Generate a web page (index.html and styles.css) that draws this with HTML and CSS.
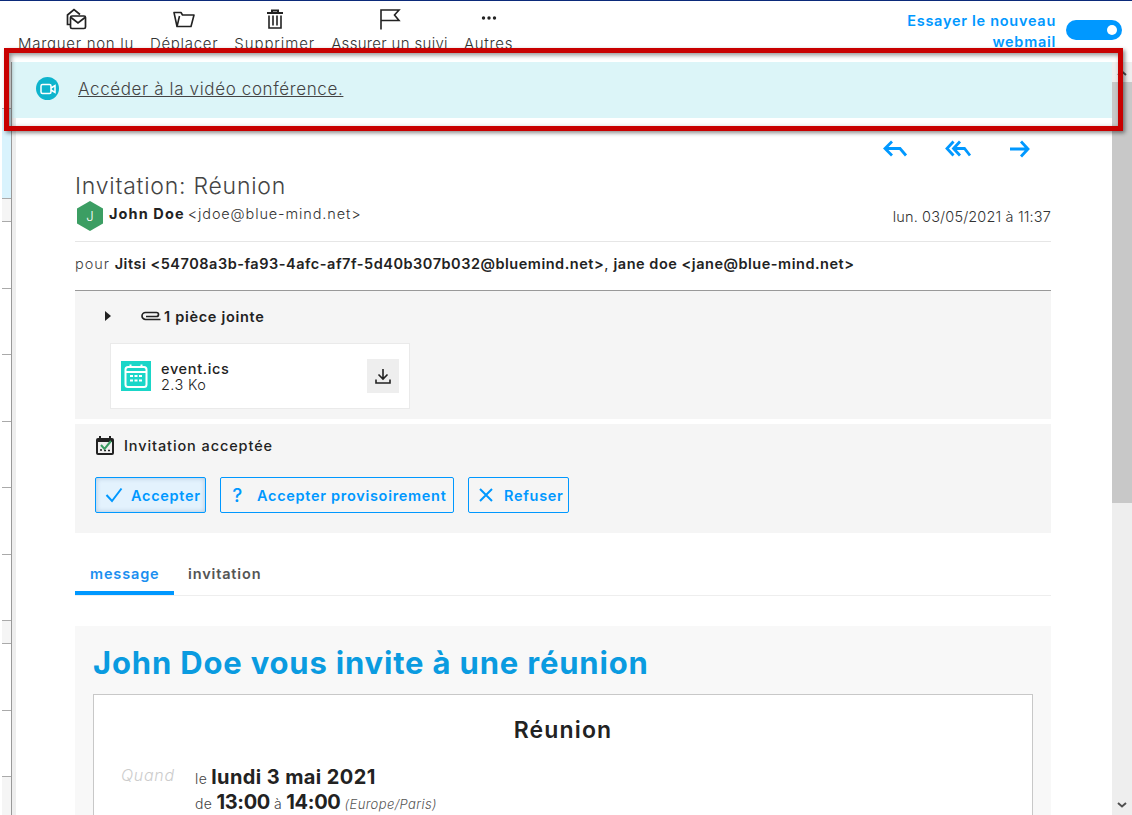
FILE: index.html
```html
<!DOCTYPE html>
<html lang="fr">
<head>
<meta charset="utf-8">
<title>Invitation: Réunion</title>
<link rel="stylesheet" href="styles.css">
</head>
<body>
<div class="app">
  <header class="toolbar">
    <nav class="actions">
      <div class="action"><svg viewBox="0 0 22 22" width="22" height="22"><path d="M2.500 13V7L9 1.500 15 6.500" fill="none" stroke="#222" stroke-width="1.700"/><path d="M2.500 13v3.500H5" fill="none" stroke="#222" stroke-width="1.700"/><rect x="5.500" y="8" width="15" height="12.500" rx="1.500" fill="#fff" stroke="#222" stroke-width="1.700"/><path d="M6 9.500l7 5.500 7-5.500" fill="none" stroke="#222" stroke-width="1.700"/></svg><span>Marquer non lu</span></div>
      <div class="action"><svg viewBox="0 0 24 20" width="24" height="20"><path d="M5 17.500L2 3.500h7l1.500 2.500H22l-3 11.500z" fill="none" stroke="#222" stroke-width="1.600" stroke-linejoin="round"/><path d="M5 17.500L7.500 7" fill="none" stroke="#222" stroke-width="1.600"/></svg><span>Déplacer</span></div>
      <div class="action action-del"><svg viewBox="0 0 20 21" width="20" height="21"><path d="M2 4.500h16M7 4.500V2h6v2.500" fill="none" stroke="#222" stroke-width="2"/><path d="M4 7v12.500h12V7M8 7v10M12 7v10" fill="none" stroke="#222" stroke-width="1.600"/></svg><span>Supprimer</span></div>
      <div class="action action-follow"><svg viewBox="0 0 22 22" width="22" height="22"><path d="M2 21.500V2h18l-4.500 5 4.500 5.500H2" fill="none" stroke="#222" stroke-width="1.600"/></svg><span>Assurer un suivi</span></div>
      <div class="action"><svg viewBox="0 0 22 22" width="22" height="22"><circle cx="5.500" cy="10" r="1.700" fill="#222"/><circle cx="11" cy="10" r="1.700" fill="#222"/><circle cx="16.500" cy="10" r="1.700" fill="#222"/></svg><span>Autres</span></div>
    </nav>
    <div class="try">
      <span class="try-label">Essayer le nouveau webmail</span>
      <span class="toggle"><i class="knob"></i></span>
    </div>
  </header>

  <div class="workspace">
    <aside class="list">
      <div class="row row-top"></div>
      <div class="row row-sel"></div>
      <div class="row row-gray row-s"></div>
      <div class="row"></div>
      <div class="row"></div>
      <div class="row"></div>
      <div class="row"></div>
      <div class="row"></div>
      <div class="row"></div>
      <div class="row row-gray row-s"></div>
      <div class="row"></div>
      <div class="row"></div>
      <div class="row row-gray"></div>
    </aside>

    <main class="reader">
      <div class="notice">
        <span class="notice-ic"><svg viewBox="0 0 16 12" width="16" height="12"><rect x="1" y="1.500" width="10" height="9" rx="1.500" fill="none" stroke="#fff" stroke-width="1.500"/><path d="M11 5l4-2.500v7L11 7" fill="none" stroke="#fff" stroke-width="1.500"/></svg></span>
        <a class="notice-link" href="#">Accéder à la vidéo conférence.</a>
      </div>

      <div class="mail-scroll">
        <div class="mail">
          <div class="reply-bar">
            <svg viewBox="0 0 26 18" width="26" height="18"><path d="M10 1.500L3 8.500l7 7M3 8.500h15l6 7" fill="none" stroke="#0098ff" stroke-width="2.800"/></svg>
            <svg viewBox="0 0 27 18" width="27" height="18"><path d="M8.500 1.500L2 8.500l6.500 7M15 1.500L8.500 8.500l6.500 7M8.500 8.500h11l5.500 7" fill="none" stroke="#0098ff" stroke-width="2.800"/></svg>
            <svg viewBox="0 0 22 18" width="22" height="18"><path d="M12 1.500l7 7.500-7 7.500M19.500 9H1" fill="none" stroke="#0098ff" stroke-width="2.800"/></svg>
          </div>

          <h1 class="subject">Invitation: Réunion</h1>
          <div class="sender">
            <div class="who">
              <span class="avatar"><svg viewBox="0 0 26 30" width="26" height="30"><path d="M13 0l13 7.500v15L13 30 0 22.500v-15z" fill="#3c9e63"/></svg><b class="avatar-letter">J</b></span>
              <span class="sender-name">John Doe</span>
              <span class="sender-mail">&lt;jdoe@blue-mind.net&gt;</span>
            </div>
            <span class="date">lun. 03/05/2021 à 11:37</span>
          </div>
          <div class="recipients">
            <span class="light">pour</span> <b>Jitsi &lt;54708a3b-fa93-4afc-af7f-5d40b307b032@bluemind.net&gt;</b>, <b>jane doe &lt;jane@blue-mind.net&gt;</b>
          </div>

          <section class="attachments">
            <div class="att-head">
              <i class="caret"></i>
              <svg class="clip" viewBox="0 0 20 10" width="20" height="10"><path d="M19.500 8.500H4.500A3.500 3.500 0 0 1 4.500 1.500h11a2 2 0 0 1 0 4H5" fill="none" stroke="#222" stroke-width="1.700"/></svg>
              <span class="att-title">1 pièce jointe</span>
            </div>
            <div class="att-card">
              <span class="att-ic"><svg viewBox="0 0 30 30" width="30" height="30"><rect width="30" height="30" fill="#1ad6c8"/><rect x="4.500" y="6" width="21" height="20" rx="2.500" fill="none" stroke="#fff" stroke-width="2"/><path d="M5 11h20M9.500 3.500V7M20.500 3.500V7" stroke="#fff" stroke-width="2"/><path d="M9 15h3M13.500 15h3M18 15h3M9 19.500h3M13.500 19.500h3M18 19.500h3" stroke="#fff" stroke-width="2.200"/></svg></span>
              <div class="att-info"><span class="att-name">event.ics</span><span class="att-size">2.3 Ko</span></div>
              <span class="att-dl"><svg viewBox="0 0 16 16" width="16" height="16"><path d="M8 1v10M3.500 6.500L8 11l4.500-4.500M1 11.500V15h14v-3.500" fill="none" stroke="#222" stroke-width="1.600"/></svg></span>
            </div>
          </section>

          <section class="invite">
            <div class="inv-head">
              <svg viewBox="0 0 20 20" width="20" height="20"><path d="M1 5a2 2 0 0 1 2-2h14a2 2 0 0 1 2 2v13a2 2 0 0 1-2 2H3a2 2 0 0 1-2-2z" fill="#222"/><path d="M5 1v3M15 1v3" stroke="#222" stroke-width="2"/><rect x="3" y="7" width="14" height="11" fill="#f0f0f0"/><path d="M5 15h2M9 15.500h2M13 15.500h2" stroke="#222" stroke-width="1.500"/><path d="M6 10l3.500 4L16 6" fill="none" stroke="#3c9e63" stroke-width="2"/></svg>
              <span class="inv-title">Invitation acceptée</span>
            </div>
            <div class="inv-actions">
              <button class="btn btn-on"><svg viewBox="0 0 18 16" width="18" height="16"><path d="M1.500 8l5.500 6L16.500 1.500" fill="none" stroke="#0098ff" stroke-width="2"/></svg><span>Accepter</span></button>
              <button class="btn btn-wide"><span class="q">?</span><span>Accepter provisoirement</span></button>
              <button class="btn btn-no"><svg viewBox="0 0 16 16" width="16" height="16"><path d="M2 2l12 12M14 2L2 14" fill="none" stroke="#0098ff" stroke-width="2"/></svg><span>Refuser</span></button>
            </div>
          </section>

          <div class="tabs">
            <span class="tab tab-on">message</span>
            <span class="tab">invitation</span>
          </div>

          <article class="event">
            <h2 class="event-head">John Doe vous invite à une réunion</h2>
            <div class="event-box">
              <h3 class="event-title">Réunion</h3>
              <div class="when">
                <span class="when-label">Quand</span>
                <div class="when-text">
                  <div class="when-day"><span class="small small-le">le</span> <b>lundi 3 mai 2021</b></div>
                  <div class="when-hour"><span class="small">de</span> <b>13:00</b> <span class="small">à</span> <b>14:00</b> <em>(Europe/Paris)</em></div>
                </div>
              </div>
            </div>
          </article>
        </div>
      </div>
    </main>

    <div class="scrollbar">
      <svg class="sb-up" viewBox="0 0 10 6" width="10" height="6"><path d="M1 5l4-3.500L9 5" fill="none" stroke="#505050" stroke-width="2"/></svg>
      <div class="sb-thumb"></div>
      <svg class="sb-down" viewBox="0 0 10 6" width="10" height="6"><path d="M1 1l4 3.500L9 1" fill="none" stroke="#505050" stroke-width="2"/></svg>
    </div>
  </div>

  <div class="annotation"></div>
</div>
</body>
</html>
```

FILE: styles.css
```css
* { box-sizing: border-box; }
html, body { margin: 0; height: 100%; overflow: hidden; background: #fff; }
body { font-family: "Inter", "Noto Sans", sans-serif; color: #222; }
svg { display: block; flex: none; }
h1, h2, h3 { margin: 0; }

.app { position: relative; height: 815px; display: flex; flex-direction: column; border-top: 1px solid #0b2a7a; overflow: hidden; }

/* toolbar */
.toolbar { height: 61px; flex: none; display: flex; justify-content: space-between; padding: 7px 10px 0 18px; }
.actions { display: flex; gap: 16px; }
.action { display: flex; flex-direction: column; align-items: center; font-size: 15px; font-weight: 300; color: #333; line-height: 17px; letter-spacing: .7px; white-space: nowrap; }
.action-del { letter-spacing: .92px; }
.action-follow { letter-spacing: .32px; }
.action svg { height: 22px; margin-bottom: 5px; }
.try { display: flex; gap: 10px; align-items: flex-start; padding-top: 2px; }
.try-label { width: 160px; text-align: right; font-size: 14.500px; font-weight: 600; line-height: 21px; color: #0098ff; letter-spacing: .72px; }
.toggle { width: 56px; height: 20px; margin-top: 10px; border-radius: 10px; background: #0098ff; display: flex; justify-content: flex-end; align-items: center; padding-right: 5px; }
.knob { width: 10px; height: 10px; border-radius: 50%; background: #fff; }

.workspace { flex: 1; min-height: 0; display: flex; }

/* message list stub */
.list { width: 12px; flex: none; padding-left: 2px; border-right: 1px solid #999; display: flex; flex-direction: column; }
.row { height: 66.500px; border-bottom: 1px solid #aaa; flex: none; }
.row-top { height: 47px; }
.row-sel { height: 90px; background: #d9f3fd; }
.row-gray { background: #f5f5f5; }
.row-s { height: 23px; }
.row:last-child { border-bottom: 0; height: 40px; }

/* reader */
.reader { flex: 1; min-width: 0; display: flex; flex-direction: column; }
.notice { height: 56px; flex: none; background: #dcf5f8; display: flex; align-items: center; gap: 19px; padding: 0 0 3px 24px; }
.notice-ic { width: 23px; height: 23px; border-radius: 50%; background: #0eb4cd; display: flex; align-items: center; justify-content: center; }
.notice-link { font-size: 17px; font-weight: 300; color: #444; letter-spacing: .63px; }

.mail-scroll { flex: 1; min-height: 0; border-left: 4px solid #eee; overflow: hidden; padding-left: 59px; }
.mail { width: 976px; }

.reply-bar { height: 54px; display: flex; justify-content: flex-end; align-items: flex-start; gap: 37px; padding: 22px 20px 0 0; }
.subject { font-size: 23px; font-weight: 300; line-height: 28px; color: #444; letter-spacing: .76px; }
.sender { height: 42px; display: flex; justify-content: space-between; border-bottom: 1px solid #e6e6e6; font-size: 14.500px; padding-top: 1px; }
.who { display: flex; align-items: flex-start; margin-left: 2px; line-height: 26px; }
.avatar { position: relative; display: block; width: 26px; height: 30px; margin-right: 6px; }
.avatar-letter { position: absolute; inset: 0; text-align: center; line-height: 30px; color: #fff; font-weight: 300; font-size: 13px; }
.sender-name { font-weight: 700; letter-spacing: 1.100px; margin-right: 3px; }
.sender-mail { font-weight: 300; letter-spacing: .87px; color: #333; }
.date { line-height: 32px; font-weight: 300; letter-spacing: .14px; color: #333; }
.recipients { height: 49px; border-bottom: 1px solid #999; padding-top: 12px; font-size: 14.500px; line-height: 20px; letter-spacing: .52px; }
.recipients b { font-weight: 600; }
.light { font-weight: 300; color: #444; letter-spacing: 1px; }

.attachments { height: 128px; background: #f5f5f5; padding: 15px 0 0 30px; }
.att-head { display: flex; align-items: center; height: 20px; }
.caret { width: 0; height: 0; border-left: 6px solid #222; border-top: 5px solid transparent; border-bottom: 5px solid transparent; }
.clip { margin-left: 30px; margin-right: 3px; }
.att-title { font-size: 14.500px; font-weight: 600; letter-spacing: .7px; }
.att-card { margin: 17px 0 0 5px; width: 300px; height: 66px; background: #fff; border: 1px solid #eaeaea; display: flex; align-items: center; padding: 0 10px; }
.att-ic { margin-right: 10px; }
.att-info { flex: 1; display: flex; flex-direction: column; padding-top: 1px; font-size: 14.500px; line-height: 16px; letter-spacing: .4px; }
.att-name { font-weight: 500; letter-spacing: .65px; }
.att-size { font-weight: 300; }
.att-dl { width: 32px; height: 34px; background: #eee; display: flex; align-items: center; justify-content: center; }

.invite { height: 109px; margin-top: 5px; background: #f5f5f5; padding: 11px 0 0 20px; }
.inv-head { display: flex; align-items: center; gap: 9px; height: 20px; }
.inv-title { font-size: 14.500px; font-weight: 500; letter-spacing: .9px; }
.inv-actions { display: flex; gap: 14px; margin-top: 22px; }
.btn { height: 36px; background: transparent; border: 1px solid #0098ff; border-radius: 2px; color: #0098ff; font: 600 14.500px "Inter", "Noto Sans", sans-serif; letter-spacing: .7px; display: flex; align-items: center; padding: 0 4px 0 9px; gap: 8px; width: 111px; white-space: nowrap; }
.btn-on { background: #e3f2fd; box-shadow: inset 0 0 5px rgba(0, 60, 120, .25); }
.btn-wide { width: 234px; padding-left: 10px; gap: 13px; }
.btn-no { width: 101px; gap: 10px; }
.q { font-size: 19px; font-weight: 500; width: 13px; text-align: center; }

.tabs { display: flex; margin-top: 22px; height: 41px; border-bottom: 1px solid #eee; font-size: 14.500px; font-weight: 600; letter-spacing: .85px; }
.tab { height: 40px; padding: 9px 13px 0 14px; line-height: 20px; color: #555; }
.tab-on { width: 99px; padding-left: 15px; color: #1b8ff0; border-bottom: 4px solid #0098ff; }

.event { margin-top: 30px; background: #f8f8f8; padding: 18px 18px 0; height: 300px; }
.event-head { font-size: 31px; line-height: 38px; margin-bottom: 12px; font-weight: 700; color: #0a9be0; letter-spacing: .82px; white-space: nowrap; }
.event-box { background: #fff; border: 1px solid #c8c8c8; height: 200px; padding: 21px 27px 0; }
.event-title { font-size: 23px; line-height: 28px; font-weight: 600; text-align: center; letter-spacing: 1.150px; }
.when { display: flex; margin-top: 19px; gap: 25px; }
.when-label { width: 49px; font-size: 16px; font-style: italic; font-weight: 300; color: #ccc; line-height: 24px; letter-spacing: .7px; }
.when-text { padding-top: 2px; }
.when-day, .when-hour { height: 25px; line-height: 25px; font-size: 20px; letter-spacing: .4px; white-space: nowrap; }
.when-hour { word-spacing: -2px; }
.when-text b { font-weight: 700; }
.when-hour b { letter-spacing: -.3px; }
.small { font-size: 14px; font-weight: 300; color: #444; }
.small-le { margin-right: -2px; }
.when-hour em { font-size: 13px; font-weight: 300; color: #555; }

/* scrollbar */
.scrollbar { width: 20px; flex: none; background: #eee; display: flex; flex-direction: column; align-items: center; padding-top: 8px; position: relative; }
.sb-up { height: 6px; }
.sb-thumb { width: 20px; height: 421px; margin-top: 6px; background: #c8c8c8; }
.sb-down { margin-top: auto; margin-bottom: 7px; }

/* red annotation overlay */
.annotation { position: absolute; left: 4px; top: 47px; width: 1119px; height: 83px; border: 5px solid #c80000; box-shadow: 2px 2px 4px rgba(0, 0, 0, .45), inset 2px 2px 5px rgba(0, 0, 0, .45); }
```
